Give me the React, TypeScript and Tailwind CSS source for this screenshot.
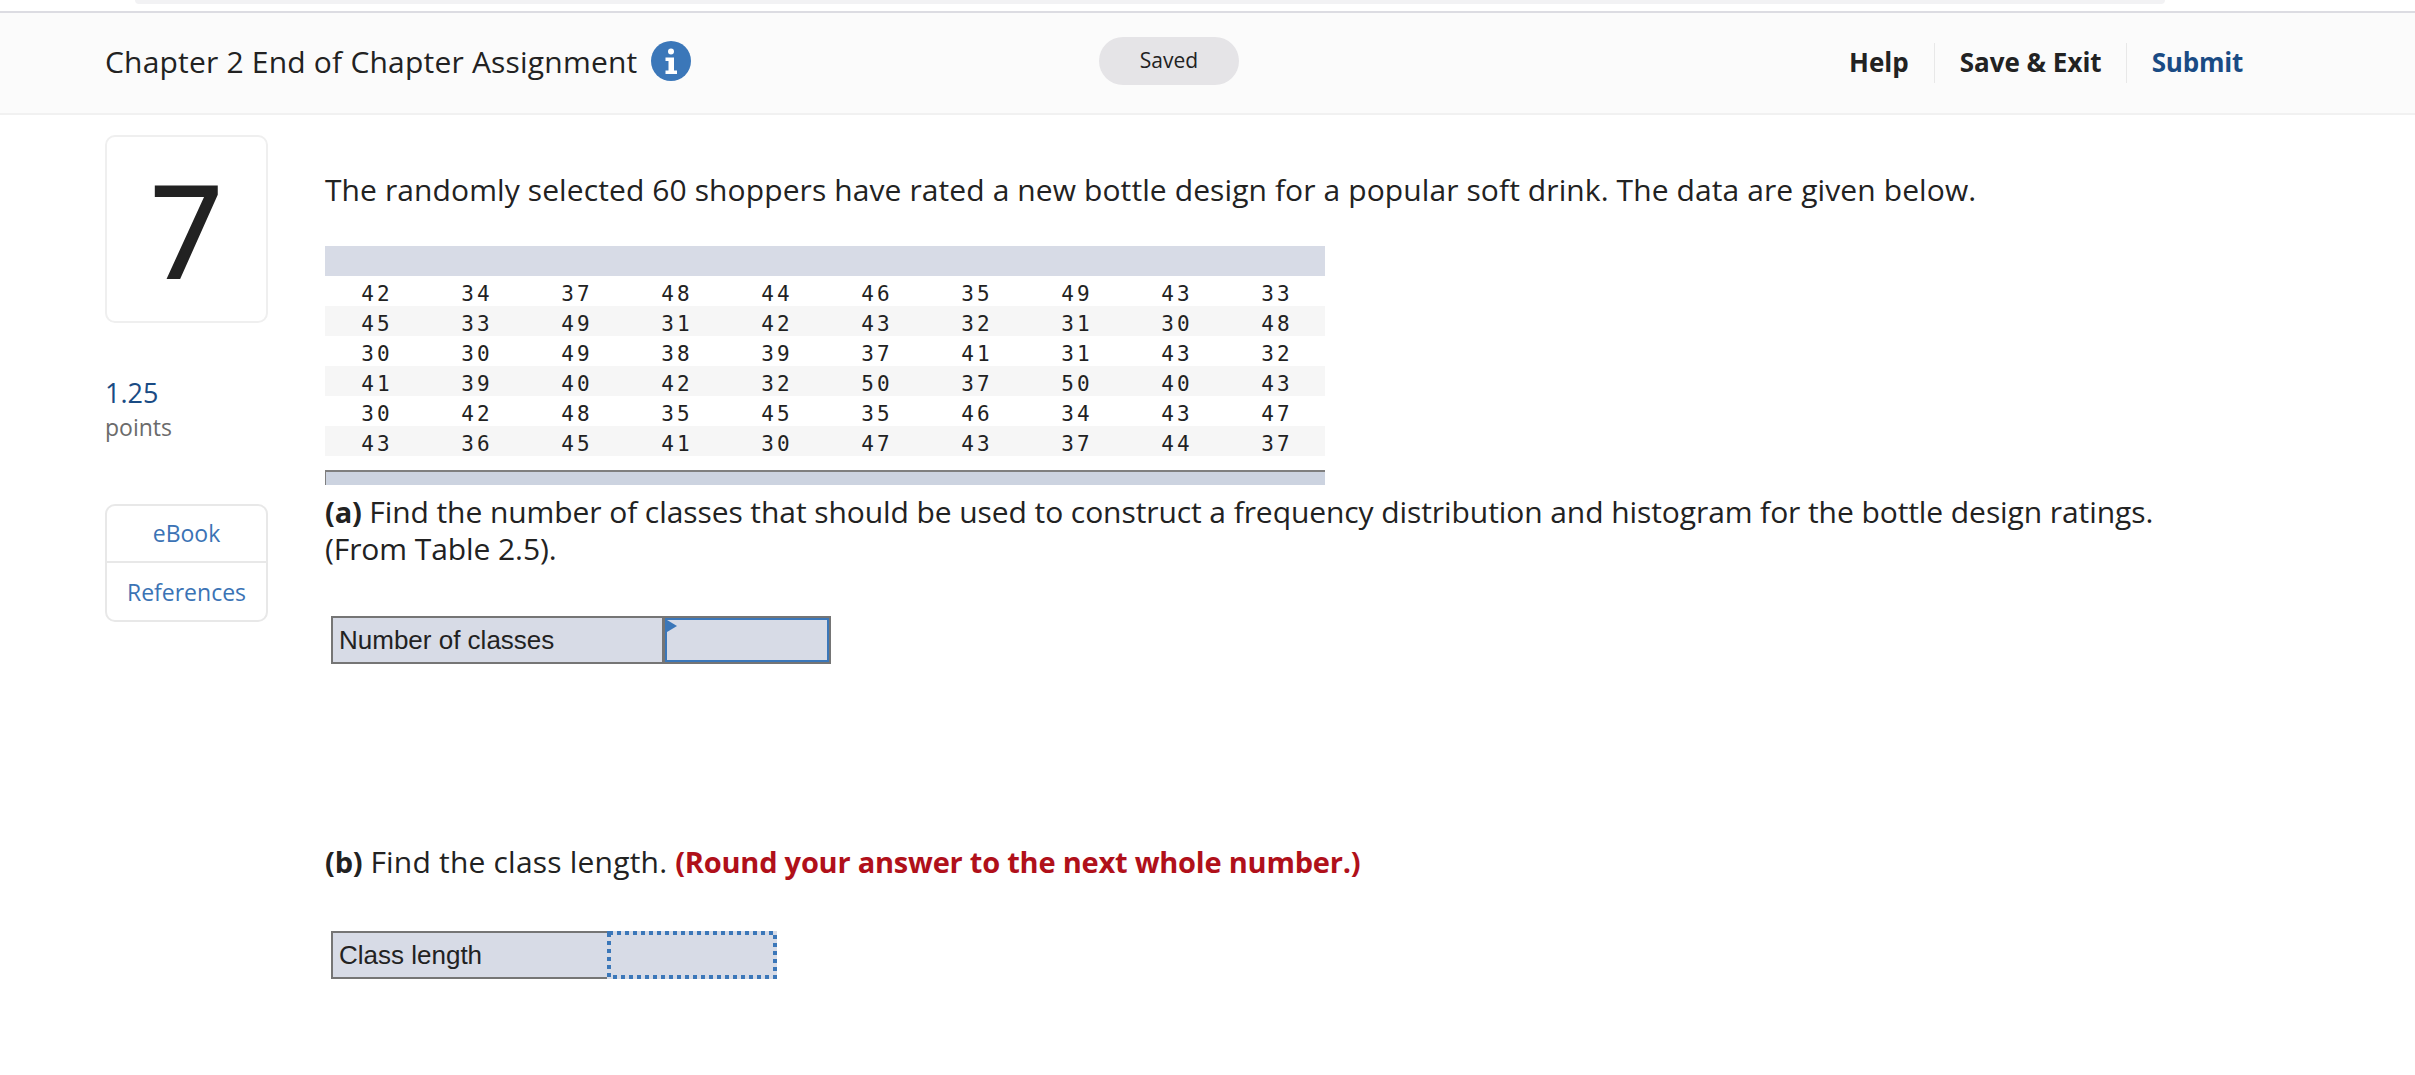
const rows = [
  [42, 34, 37, 48, 44, 46, 35, 49, 43, 33],
  [45, 33, 49, 31, 42, 43, 32, 31, 30, 48],
  [30, 30, 49, 38, 39, 37, 41, 31, 43, 32],
  [41, 39, 40, 42, 32, 50, 37, 50, 40, 43],
  [30, 42, 48, 35, 45, 35, 46, 34, 43, 47],
  [43, 36, 45, 41, 30, 47, 43, 37, 44, 37],
]

function InfoIcon() {
  return (
    <svg viewBox="0 0 40 40" className="ml-[14px] h-[40px] w-[40px] shrink-0">
      <circle cx="20" cy="20" r="20" fill="#3b77b9" />
      <circle cx="20" cy="10.5" r="3" fill="#fff" />
      <path d="M14.5 16.5h8.5v13h3v3.5H14.5v-3.5h3v-9.500h-3z" fill="#fff" />
    </svg>
  )
}

export default function App() {
  return (
    <div className="h-[1075px] w-[2415px] overflow-hidden bg-white font-['Open_Sans',sans-serif] text-[#222]">
      <div className="ml-[135px] h-[4px] w-[2030px] rounded-b-lg bg-[#f2f2f4]" />

      <header className="mt-[7px] flex h-[104px] items-center border-t-2 border-b-2 border-t-[#dcdce2] border-b-[#f1f1f1] bg-[#fbfbfb] pb-[4px] pl-[105px]">
        <div className="flex w-[994px] items-center">
          <h1 className="text-[30px] font-normal tracking-[0.2px]">Chapter 2 End of Chapter Assignment</h1>
          <InfoIcon />
        </div>
        <div className="flex h-[48px] w-[140px] items-center justify-center rounded-full bg-[#e5e4e7] text-[21px]">
          Saved
        </div>
        <nav className="ml-[610px] mt-[3px] flex items-center text-[26px] font-bold">
          <span>Help</span>
          <span className="ml-[25px] h-[40px] border-l border-[#e8e8e8]" />
          <span className="ml-[25px]">Save &amp; Exit</span>
          <span className="ml-[24px] h-[40px] border-l border-[#e8e8e8]" />
          <span className="ml-[25px] tracking-[-0.2px] text-[#1a4b84]">Submit</span>
        </nav>
      </header>

      <div className="flex pl-[105px] pt-[20px]">
        <aside className="w-[163px] shrink-0">
          <div className="flex h-[188px] items-center justify-center rounded-[10px] border-2 border-[#efefef] text-[128px] leading-none font-normal [-webkit-text-stroke:2px_#222]">
            7
          </div>
          <div className="mt-[51px] text-[27px] leading-[38px] text-[#1a4b84]">1.25</div>
          <div className="text-[23px] leading-[30px] text-[#6b6b6b]">points</div>
          <div className="mt-[62px] flex flex-col rounded-[10px] border-2 border-[#e8e8e8] text-[23px] text-[#3b73b5]">
            <div className="flex h-[57px] items-center justify-center border-b-2 border-[#e8e8e8]">eBook</div>
            <div className="flex h-[57px] items-center justify-center pt-[2px]">References</div>
          </div>
        </aside>

        <main className="ml-[57px] w-[1900px] text-[30px] leading-[37px]">
          <p className="mt-[36px] tracking-[0.1px]">
            The randomly selected 60 shoppers have rated a new bottle design for a popular soft drink. The data are given below.
          </p>

          <div className="mt-[38px] w-[1000px]">
            <div className="h-[30px] bg-[#d7dbe6]" />
            {rows.map((row, i) => (
              <div
                key={i}
                className={`grid h-[30px] grid-cols-10 items-center pt-[6px] font-['DejaVu_Sans_Mono',monospace] text-[21px] leading-[24px] tracking-[3px] ${i % 2 === 1 ? 'bg-[#f6f6f6]' : 'bg-white'}`}
              >
                {row.map((n, j) => (
                  <span key={j} className="pl-[4px] text-center">{n}</span>
                ))}
              </div>
            ))}
            <div className="mt-[14px] h-[15px] border-t-2 border-l border-t-[#7f7f7f] border-l-[#7f7f7f] bg-[#ccd3e0]" />
          </div>

          <p className="mt-[8px] tracking-[-0.08px]">
            <b className="text-[29px] tracking-[-0.2px]">(a)</b> Find the number of classes that should be used to construct a frequency distribution and histogram for the bottle design ratings.
            <br />
            (From Table 2.5).
          </p>

          <div className="mt-[49px] ml-[6px] flex h-[48px] w-[500px] border-2 border-[#757575] bg-[#d7dbe6] font-['Liberation_Sans',sans-serif] text-[26px] tracking-normal text-[#222]">
            <div className="flex w-[332px] items-center border-r-[3px] border-[#757575] pl-[6px]">Number of classes</div>
            <div className="relative flex-1 border-2 border-[#3b77b9]">
              <svg viewBox="0 0 10 12" className="absolute top-0 left-0 h-[12px] w-[10px]">
                <path d="M0 0l10 6-10 6z" fill="#3b77b9" />
              </svg>
            </div>
          </div>

          <p className="mt-[179px] tracking-[0.2px]">
            <b className="text-[29px] tracking-[-0.2px]">(b)</b> Find the class length. <b className="text-[29px] tracking-[-0.22px] text-[#b0101a]">(Round your answer to the next whole number.)</b>
          </p>

          <div className="mt-[51px] ml-[6px] flex h-[48px] w-[446px] bg-[#d7dbe6] font-['Liberation_Sans',sans-serif] text-[26px] tracking-normal text-[#222]">
            <div className="flex w-[276px] items-center border-y-2 border-l-2 border-[#757575] pl-[6px]">Class length</div>
            <div className="relative flex-1">
              <svg viewBox="0 0 170 48" className="absolute inset-0 h-[48px] w-[170px]">
                <rect x="2" y="2" width="166" height="44" fill="none" stroke="#3b77b9" strokeWidth="4" strokeDasharray="4 4" />
              </svg>
            </div>
          </div>
        </main>
      </div>
    </div>
  )
}
